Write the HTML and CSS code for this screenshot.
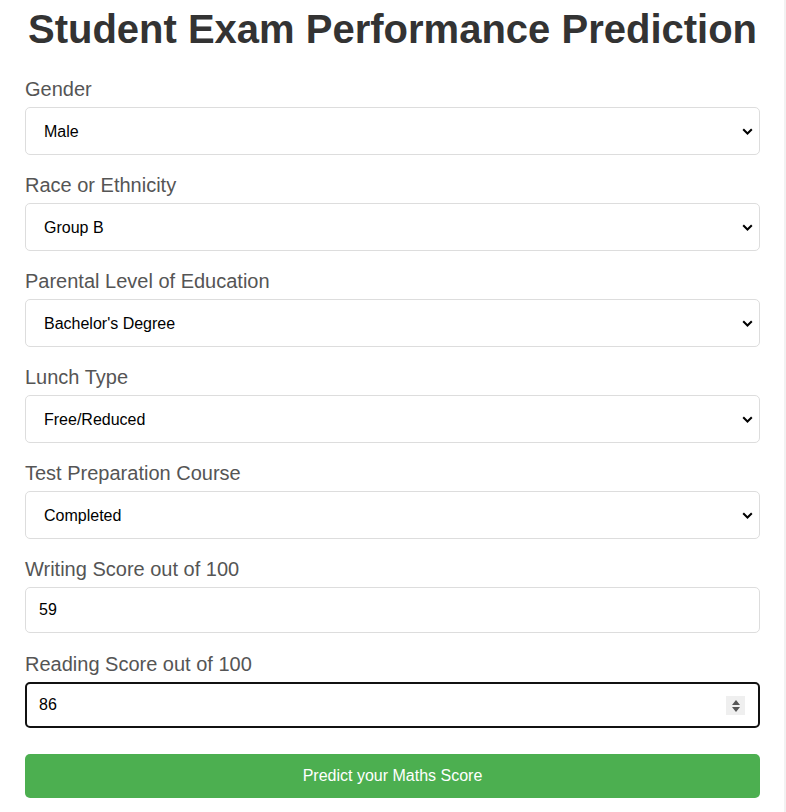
FILE: index.html
```html
<!DOCTYPE html>
<html lang="en">
<head>
<meta charset="utf-8">
<title>Student Exam Performance Prediction</title>
<link rel="stylesheet" href="styles.css">
</head>
<body>
<div class="container">
  <h1 class="title">Student Exam Performance Prediction</h1>
  <form class="form">
    <label class="label" for="gender">Gender</label>
    <select id="gender" class="field select">
      <option>Male</option>
      <option>Female</option>
    </select>

    <label class="label" for="race">Race or Ethnicity</label>
    <select id="race" class="field select">
      <option>Group B</option>
    </select>

    <label class="label" for="edu">Parental Level of Education</label>
    <select id="edu" class="field select">
      <option>Bachelor's Degree</option>
    </select>

    <label class="label" for="lunch">Lunch Type</label>
    <select id="lunch" class="field select">
      <option>Free/Reduced</option>
    </select>

    <label class="label" for="prep">Test Preparation Course</label>
    <select id="prep" class="field select">
      <option>Completed</option>
    </select>

    <label class="label" for="writing">Writing Score out of 100</label>
    <input id="writing" class="field input" type="number" value="59">

    <label class="label" for="reading">Reading Score out of 100</label>
    <div class="input-wrap">
      <input id="reading" class="field input focused" type="number" value="86" autofocus>
      <span class="spin" aria-hidden="true">
        <svg width="10" height="14" viewBox="0 0 10 14"><path d="M5 1 L9 6 H1 Z M1 8 H9 L5 13 Z" fill="#555"/></svg>
      </span>
    </div>

    <button type="button" class="btn">Predict your Maths Score</button>
  </form>
</div>
</body>
</html>
```

FILE: styles.css
```css
html, body {
  margin: 0;
  padding: 0;
}
body {
  background: #f2f2f2;
  font-family: "Liberation Sans", Arial, sans-serif;
}
.container {
  background: #fff;
  margin-right: 2px;
  padding: 6px 24px 40px 25px;
  min-height: 812px;
  box-sizing: border-box;
}
.title {
  margin: 0 0 26px;
  text-align: center;
  font-size: 40px;
  font-weight: bold;
  color: #333;
  line-height: 46px;
  white-space: nowrap;
}
.form {
  display: flex;
  flex-direction: column;
}
.label {
  display: block;
  font-size: 20px;
  line-height: 23px;
  color: #555;
  margin-bottom: 6px;
}
.field {
  box-sizing: border-box;
  width: 100%;
  border: 1px solid #ddd;
  border-radius: 5px;
  background-color: #fff;
  font-family: "Liberation Sans", Arial, sans-serif;
  font-size: 16px;
  color: #000;
  margin: 0 0 19px;
}
.select {
  height: 48px;
  padding: 0 30px 0 18px;
  -webkit-appearance: none;
  appearance: none;
  background-image: url("data:image/svg+xml,%3Csvg xmlns='http://www.w3.org/2000/svg' width='11' height='7' viewBox='0 0 11 7'%3E%3Cpath d='M1.2 1.2 L5.5 5.5 L9.8 1.2' fill='none' stroke='%23000' stroke-width='2'/%3E%3C/svg%3E");
  background-repeat: no-repeat;
  background-position: right 6px center;
}
.input {
  height: 46px;
  padding: 0 12px 0 13px;
  margin-bottom: 20px;
}
.input::-webkit-inner-spin-button,
.input::-webkit-outer-spin-button {
  -webkit-appearance: none;
  margin: 0;
}
.input-wrap {
  position: relative;
  margin-bottom: 26px;
}
.input-wrap .field {
  margin: 0;
}
.focused {
  border: 2px solid #111;
  outline: none;
  padding-left: 12px;
}
.input:focus {
  outline: none;
}
.spin {
  position: absolute;
  right: 15px;
  top: 14px;
  width: 19px;
  height: 19px;
  background: #efefef;
  display: flex;
  align-items: center;
  justify-content: center;
}
.btn {
  box-sizing: border-box;
  width: 100%;
  height: 44px;
  border: none;
  border-radius: 5px;
  background: #4caf50;
  color: #fff;
  font-family: "Liberation Sans", Arial, sans-serif;
  font-size: 16px;
  cursor: pointer;
}
```
